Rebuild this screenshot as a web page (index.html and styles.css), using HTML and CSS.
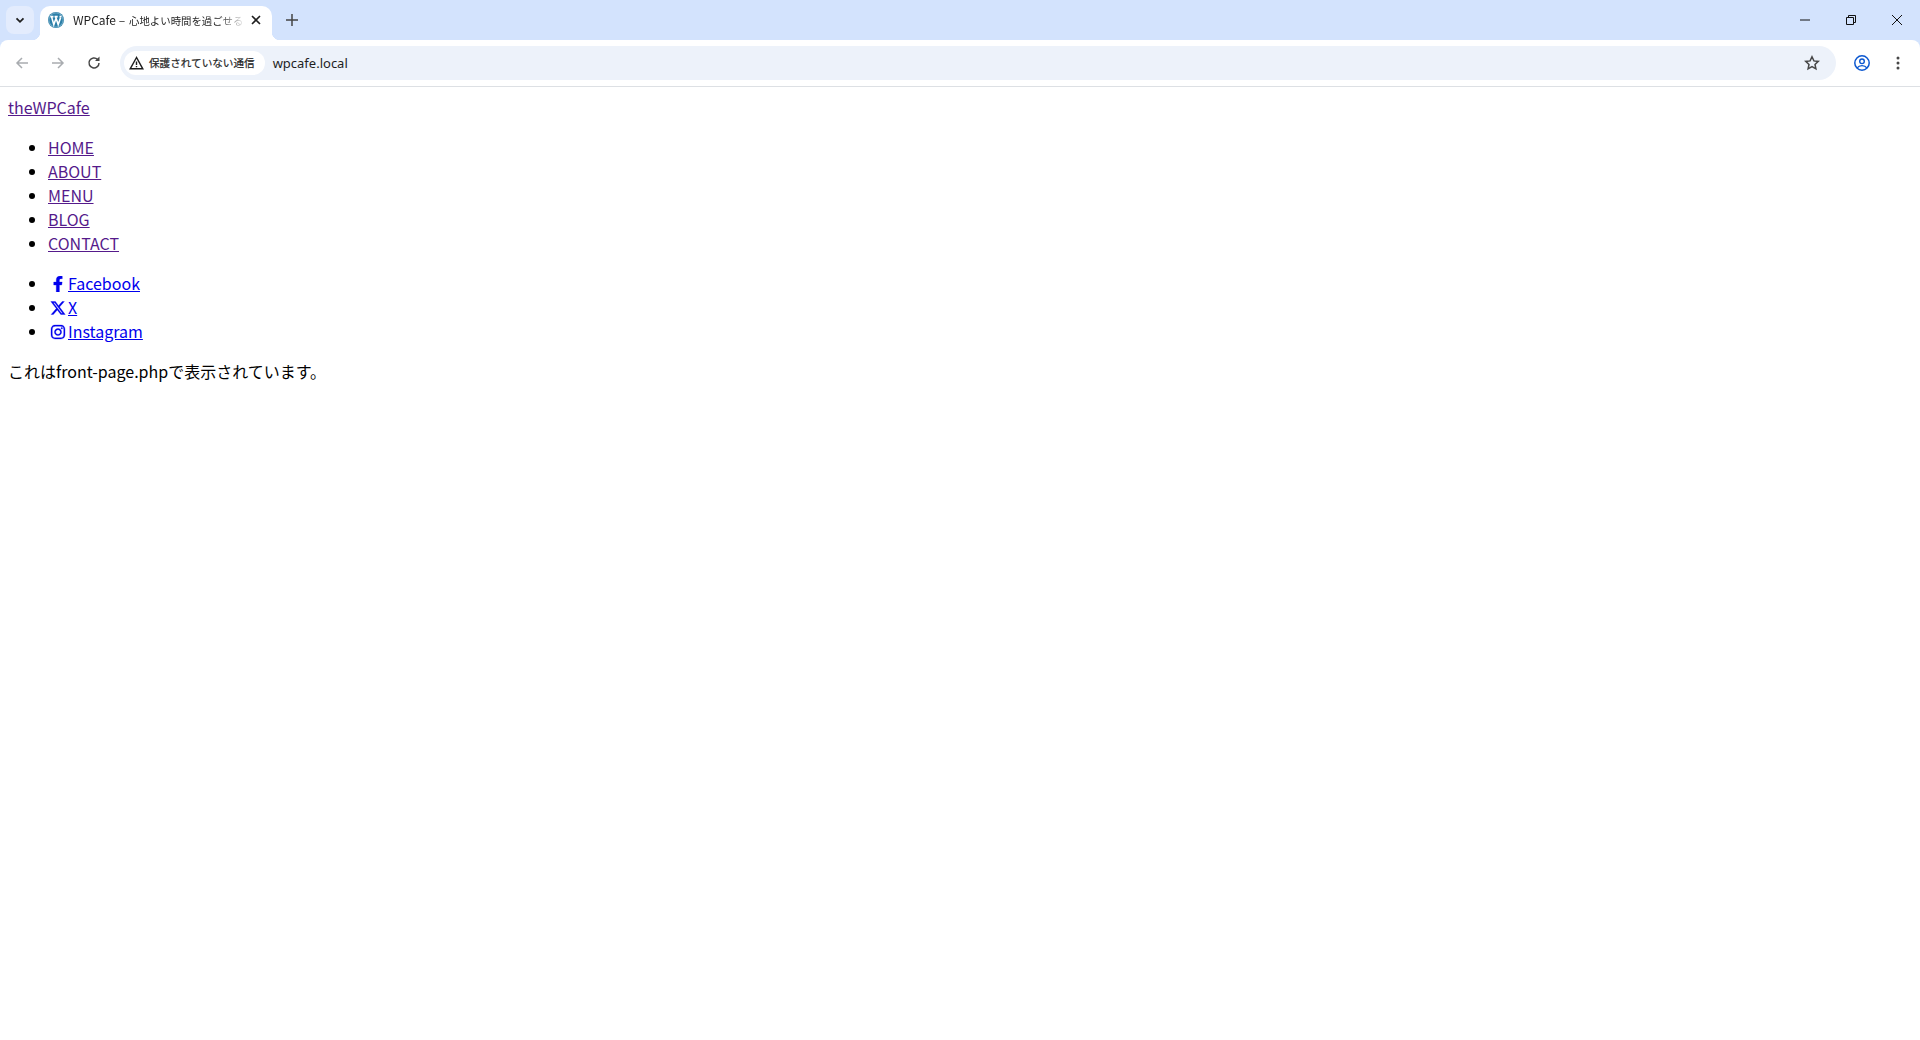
FILE: index.html
```html
<!DOCTYPE html>
<html lang="ja">
<head>
  <meta charset="UTF-8">
  <title>WPCafe</title>
  <link rel="stylesheet" href="styles.css">
</head>
<body>
  <!-- Browser tabs -->
  <div class="tabstrip">
    <div class="tab-search">
      <svg width="12" height="12" viewBox="0 0 12 12"><path d="M2.500 4.300L6 7.800l3.500-3.500" fill="none" stroke="#1f1f1f" stroke-width="1.800"/></svg>
    </div>
    <div class="tab">
      <svg class="favicon" width="16" height="16" viewBox="0 0 16 16">
        <circle cx="8" cy="8" r="8" fill="#2b7fa8"/>
        <circle cx="8" cy="8" r="7.100" fill="none" stroke="#bcd8e6" stroke-width=".5"/>
        <path d="M2.300 4.600h3.200M6.500 4.600h3.200M11.500 4.600h2M3.500 4.600l2.300 8 2.200-6.200M7.500 4.600l2.700 8 2.400-6.800" fill="none" stroke="#fff" stroke-width="1.600"/>
      </svg>
      <span class="tab-title">WPCafe –<span class="tab-title-ja">心地よい時間を過ごせる</span></span>
      <svg class="tab-close" width="10" height="10" viewBox="0 0 10 10"><path d="M1 1l8 8M9 1l-8 8" stroke="#1f1f1f" stroke-width="1.600"/></svg>
    </div>
    <svg class="new-tab" width="12" height="12" viewBox="0 0 12 12"><path d="M6 0v12M0 6h12" stroke="#444" stroke-width="1.500"/></svg>
    <div class="win-controls">
      <svg width="10" height="10" viewBox="0 0 10 10"><path d="M0 5h10" stroke="#111" stroke-width="1"/></svg>
      <svg width="10" height="10" viewBox="0 0 10 10"><path d="M.5 2.500h7v7h-7zM2.500 2.500v-2h7v7h-2" fill="none" stroke="#111" stroke-width="1"/></svg>
      <svg width="10" height="10" viewBox="0 0 10 10"><path d="M0 0l10 10M10 0l-10 10" stroke="#111" stroke-width="1"/></svg>
    </div>
  </div>

  <!-- Toolbar -->
  <div class="toolbar">
    <svg class="nav-icon" width="16" height="16" viewBox="0 0 16 16"><path d="M14 8H3M8 3L3 8l5 5" fill="none" stroke="#a9acb0" stroke-width="1.500"/></svg>
    <svg class="nav-icon" width="16" height="16" viewBox="0 0 16 16"><path d="M2 8h11M8 3l5 5-5 5" fill="none" stroke="#a9acb0" stroke-width="1.500"/></svg>
    <svg class="nav-icon" width="16" height="16" viewBox="0 0 16 16"><path d="M13 8a5 5 0 1 1-1.500-3.600" fill="none" stroke="#474747" stroke-width="1.500"/><path d="M13.500 1.500v4.500H9z" fill="#474747"/></svg>
    <div class="omnibox">
      <div class="chip">
        <svg width="15" height="14" viewBox="0 0 15 14"><path d="M7.500 1.500L1.200 12.800h12.600zM7.500 5.500v3.500M7.500 10v1.300" fill="none" stroke="#1f1f1f" stroke-width="1.400"/></svg>
        <span>保護されていない通信</span>
      </div>
      <span class="url">wpcafe.local</span>
      <svg class="star" width="16" height="16" viewBox="0 0 16 16"><path d="M8 1.800l1.900 4.100 4.400.5-3.300 3 .9 4.400L8 11.600l-3.900 2.200.9-4.400-3.300-3 4.400-.5z" fill="none" stroke="#474747" stroke-width="1.500"/></svg>
    </div>
    <svg class="profile" width="16" height="16" viewBox="0 0 16 16"><circle cx="8" cy="8" r="7.200" fill="none" stroke="#0b57d0" stroke-width="1.500"/><circle cx="8" cy="6.300" r="2.300" fill="none" stroke="#0b57d0" stroke-width="1.400"/><path d="M3.200 12.800c1-1.500 3-2.200 4.800-2.200s3.800.7 4.800 2.200" fill="none" stroke="#0b57d0" stroke-width="1.400"/></svg>
    <svg class="menu-dots" width="4" height="14" viewBox="0 0 4 14"><circle cx="2" cy="2" r="1.500" fill="#474747"/><circle cx="2" cy="7" r="1.500" fill="#474747"/><circle cx="2" cy="12" r="1.500" fill="#474747"/></svg>
  </div>

  <!-- Page -->
  <div class="page">
    <p><a class="visited" href="#">theWPCafe</a></p>
    <ul>
      <li><a class="visited" href="#">HOME</a></li>
      <li><a class="visited" href="#">ABOUT</a></li>
      <li><a class="visited" href="#">MENU</a></li>
      <li><a class="visited" href="#">BLOG</a></li>
      <li><a class="visited" href="#">CONTACT</a></li>
    </ul>
    <ul>
      <li><svg class="social" viewBox="0 0 320 512"><path d="M279.140 288l14.220-92.660h-88.910v-60.130c0-25.350 12.420-50.060 52.240-50.060h40.420V6.260S260.430 0 225.360 0c-73.220 0-121.080 44.380-121.080 124.720v70.620H22.890V288h81.390v224h100.170V288z"/></svg><a href="#">Facebook</a></li>
      <li><svg class="social" viewBox="0 0 512 512"><path d="M389.200 48h70.600L305.600 224.200 487 464H345L233.700 318.600 106.500 464H35.800L200.700 275.500 26.800 48H172.400L272.900 180.900 389.200 48zM364.400 421.800h39.100L151.100 88h-42L364.400 421.800z"/></svg><a href="#">X</a></li>
      <li><svg class="social" viewBox="0 0 448 512"><path d="M224.100 141c-63.600 0-114.900 51.300-114.900 114.900s51.300 114.900 114.900 114.900S339 319.500 339 255.900 287.700 141 224.100 141zm0 189.600c-41.100 0-74.700-33.500-74.700-74.700s33.500-74.700 74.700-74.700 74.700 33.500 74.700 74.700-33.600 74.700-74.700 74.700zm146.400-194.300c0 14.900-12 26.800-26.800 26.800-14.900 0-26.800-12-26.800-26.800s12-26.800 26.800-26.800 26.800 12 26.800 26.800zm76.100 27.200c-1.700-35.900-9.900-67.700-36.200-93.900-26.200-26.200-58-34.400-93.900-36.200-37-2.100-147.900-2.100-184.900 0-35.800 1.700-67.600 9.900-93.900 36.100s-34.400 58-36.200 93.900c-2.100 37-2.100 147.900 0 184.900 1.700 35.900 9.900 67.700 36.200 93.900s58 34.400 93.900 36.200c37 2.100 147.900 2.100 184.900 0 35.900-1.700 67.700-9.900 93.900-36.200 26.200-26.200 34.400-58 36.200-93.900 2.100-37 2.100-147.800 0-184.800zM398.800 388c-7.800 19.600-22.900 34.700-42.600 42.600-29.500 11.700-99.500 9-132.100 9s-102.700 2.600-132.100-9c-19.600-7.800-34.700-22.900-42.600-42.600-11.700-29.500-9-99.500-9-132.100s-2.600-102.700 9-132.100c7.800-19.600 22.900-34.700 42.600-42.600 29.500-11.700 99.500-9 132.100-9s102.700-2.600 132.100 9c19.600 7.800 34.700 22.900 42.600 42.600 11.700 29.500 9 99.500 9 132.100s2.700 102.700-9 132.100z"/></svg><a href="#">Instagram</a></li>
    </ul>
    <p>これはfront-page.phpで表示されています。</p>
  </div>
</body>
</html>
```

FILE: styles.css
```css
html, body {
  margin: 0;
  padding: 0;
  height: 100%;
}
body {
  display: flex;
  flex-direction: column;
  background-color: #d3e3fd;
  overflow: hidden;
}

/* Browser tabs */
.tabstrip {
  display: flex;
  align-items: flex-start;
  height: 40px;
  flex: none;
  background-color: #d3e3fd;
  font-family: "Noto Sans CJK JP", sans-serif;
}
.tab-search {
  display: flex;
  align-items: center;
  justify-content: center;
  width: 28px;
  height: 28px;
  margin: 6px 6px 0 6px;
  border-radius: 8px;
  background-color: #e3ecfd;
}
.tab {
  position: relative;
  display: flex;
  align-items: center;
  width: 232px;
  height: 34px;
  box-sizing: border-box;
  margin-top: 6px;
  padding: 0 11px 6px 8px;
  border-radius: 10px 10px 0 0;
  background-color: #fff;
}
/* concave corners at the foot of the active tab */
.tab::before,
.tab::after {
  content: "";
  position: absolute;
  bottom: 0;
  width: 8px;
  height: 8px;
}
.tab::before {
  left: -8px;
  background: radial-gradient(circle at 0 0, transparent 8px, #fff 8.500px);
}
.tab::after {
  right: -8px;
  background: radial-gradient(circle at 100% 0, transparent 8px, #fff 8.500px);
}
.tab-title {
  flex: 1;
  margin-left: 9px;
  white-space: nowrap;
  font-size: 12px;
  line-height: 16px;
  color: #1f1f1f;
  -webkit-mask-image: linear-gradient(to right, #000 84%, transparent);
  mask-image: linear-gradient(to right, #000 84%, transparent);
}
.tab-title-ja {
  margin-left: 4px;
  font-size: 10.400px;
}
.tab-close {
  margin-left: 5px;
}
.new-tab {
  margin: 14px 0 0 14px;
}
.win-controls {
  display: flex;
  align-items: center;
  gap: 36px;
  height: 40px;
  margin-left: auto;
  padding-right: 18px;
}

/* Toolbar */
.toolbar {
  display: flex;
  align-items: center;
  height: 47px;
  flex: none;
  box-sizing: border-box;
  padding: 0 20px 1px 14px;
  background-color: #fff;
  border-bottom: 1px solid #dde0e4;
  border-radius: 8px 8px 0 0;
  font-family: "Noto Sans CJK JP", sans-serif;
  color: #1f1f1f;
}
.nav-icon {
  margin-right: 20px;
}
.nav-icon:nth-child(3) {
  margin-right: 18px;
}
.omnibox {
  display: flex;
  align-items: center;
  flex: 1;
  height: 34px;
  padding: 0 16px 0 4px;
  border-radius: 17px;
  background-color: #edf2fa;
}
.chip {
  display: flex;
  align-items: center;
  gap: 5px;
  height: 24px;
  padding: 0 10px 0 5px;
  border-radius: 12px;
  background-color: #fff;
  font-size: 10.600px;
  -webkit-text-stroke: .2px #1f1f1f;
}
.url {
  margin-left: 8px;
  font-family: "Noto Sans", sans-serif;
  font-size: 13px;
}
.star {
  margin-left: auto;
}
.profile {
  margin-left: 18px;
}
.menu-dots {
  margin-left: 26px;
}

/* Page */
.page {
  flex: 1;
  padding: 8px;
  background-color: #fff;
  font-family: "Noto Sans CJK JP", sans-serif;
  font-size: 16px;
  line-height: 24px;
  color: #000;
}
.page p {
  margin: 0 0 16px 0;
}
.page ul {
  margin: 16px 0;
  padding-left: 40px;
}
.page a {
  color: #00e;
}
.page a.visited {
  color: #551a8b;
}
.social {
  width: 20px;
  height: 16px;
  fill: #00e;
  stroke: #00e;
  stroke-width: 10;
  vertical-align: -2px;
}
```
